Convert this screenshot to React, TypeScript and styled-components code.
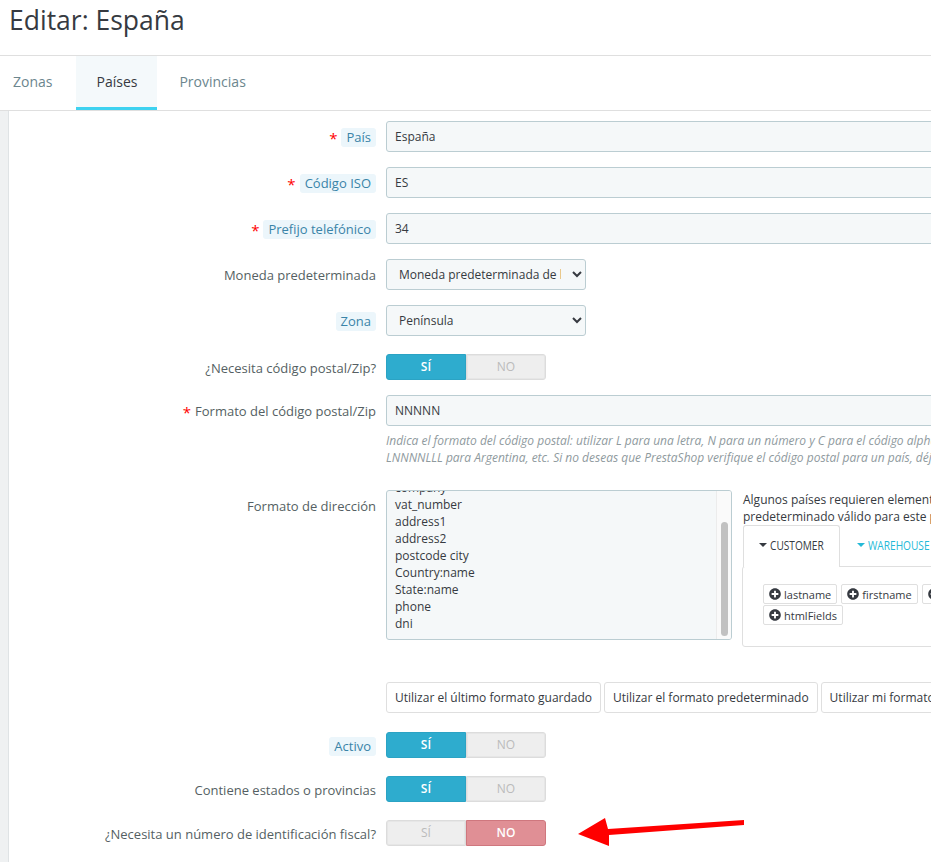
import React from 'react';
import styled, { createGlobalStyle } from 'styled-components';
import { FaPlusCircle } from 'react-icons/fa';

const GlobalStyle = createGlobalStyle`
  html, body {
    margin: 0;
    padding: 0;
    background: #fff;
    overflow: hidden;
  }
  body {
    font-family: "Open Sans", "Liberation Sans", sans-serif;
    color: #363a41;
  }
`;

const address = ['company', 'vat_number', 'address1', 'address2', 'postcode city', 'Country:name', 'State:name', 'phone', 'dni'];
const tags = ['lastname', 'firstname', 'company', 'htmlFields'];

const Field: React.FC<{ required?: boolean; hint?: boolean; label: string }> = ({ required, hint, label }) => (
  <LabelCell>
    {required && <Star>*</Star>}
    <LabelText $hint={hint}>{label}</LabelText>
  </LabelCell>
);

const Switch: React.FC<{ on: boolean }> = ({ on }) => (
  <Toggle>
    <ToggleHalf $active={on} $tone="yes">SÍ</ToggleHalf>
    <ToggleHalf $active={!on} $tone="no">NO</ToggleHalf>
  </Toggle>
);

const App: React.FC = () => (
  <Page>
    <GlobalStyle />
    <Header>
      <Title>Editar: España</Title>
    </Header>
    <Tabs>
      <Tab>Zonas</Tab>
      <Tab $active>Países</Tab>
      <Tab>Provincias</Tab>
    </Tabs>
    <Body>
      <Strip />
      <Form>
        <Row $top={10}>
          <Field required hint label="País" />
          <Input>España</Input>
        </Row>
        <Row $top={15}>
          <Field required hint label="Código ISO" />
          <Input>ES</Input>
        </Row>
        <Row $top={15}>
          <Field required hint label="Prefijo telefónico" />
          <Input>34</Input>
        </Row>
        <Row $top={15}>
          <Field label="Moneda predeterminada" />
          <Select defaultValue="default">
            <option value="default">Moneda predeterminada de la tienda</option>
          </Select>
        </Row>
        <Row $top={15}>
          <Field hint label="Zona" />
          <Select defaultValue="pen">
            <option value="pen">Península</option>
          </Select>
        </Row>
        <Row $top={18}>
          <Field label="¿Necesita código postal/Zip?" />
          <Switch on />
        </Row>
        <Row $top={15}>
          <Field required label="Formato del código postal/Zip" />
          <Input>NNNNN</Input>
        </Row>
        <HelpRow>
          <HelpLine>Indica el formato del código postal: utilizar L para una letra, N para un número y C para el código alpha ISO 3166-1 del país.</HelpLine>
          <HelpLine>LNNNNLLL para Argentina, etc. Si no deseas que PrestaShop verifique el código postal para un país, déjalo vacío.</HelpLine>
        </HelpRow>
        <AddressRow>
          <AddressLabel>
            <LabelText>Formato de dirección</LabelText>
          </AddressLabel>
          <AddressBox>
            <AddressLines>
              {address.map((line) => (
                <AddressLine key={line}>{line}</AddressLine>
              ))}
            </AddressLines>
            <ScrollTrack>
              <ScrollThumb />
            </ScrollTrack>
          </AddressBox>
          <Aside>
            <AsideText>Algunos países requieren elementos específicos en la dirección. Utiliza un formato</AsideText>
            <AsideText>predeterminado válido para este país.</AsideText>
            <AsideTabs>
              <AsideTab $active>
                <Caret $active />
                <Narrow>CUSTOMER</Narrow>
              </AsideTab>
              <AsideTab>
                <Caret />
                <Narrow>WAREHOUSE</Narrow>
              </AsideTab>
            </AsideTabs>
            <TagPanel>
              <TagList>
                {tags.map((tag) => (
                  <Tag key={tag}>
                    <FaPlusCircle size={12} color="#363a41" />
                    {tag}
                  </Tag>
                ))}
              </TagList>
            </TagPanel>
          </Aside>
        </AddressRow>
        <ButtonRow>
          <FormatButton>Utilizar el último formato guardado</FormatButton>
          <FormatButton>Utilizar el formato predeterminado</FormatButton>
          <FormatButton>Utilizar mi formato actual</FormatButton>
        </ButtonRow>
        <Row $top={19}>
          <Field hint label="Activo" />
          <Switch on />
        </Row>
        <Row $top={18}>
          <Field label="Contiene estados o provincias" />
          <Switch on />
        </Row>
        <Row $top={18}>
          <Field label="¿Necesita un número de identificación fiscal?" />
          <Switch on={false} />
        </Row>
      </Form>
    </Body>
    <Arrow viewBox="0 0 170 30" width="170" height="30">
      <polygon fill="#ff0000" points="1,17 28,1 31,12 167,3 167,8 32,18 32,29" />
    </Arrow>
  </Page>
);

const Page = styled.div`
  position: relative;
  width: 931px;
  height: 862px;
  overflow: hidden;
  background: #fff;
`;

const Header = styled.header`
  height: 56px;
  box-sizing: border-box;
  padding: 0 9px;
  border-bottom: 1px solid #dfdfdf;
`;

const Title = styled.h1`
  margin: 0;
  font-size: 26.5px;
  font-weight: 400;
  line-height: 40px;
  color: #363a41;
`;

const Tabs = styled.nav`
  display: flex;
  gap: 2px;
  height: 55px;
  box-sizing: border-box;
  margin-left: -7px;
  border-bottom: 1px solid #dfdfdf;
`;

const Tab = styled.div<{ $active?: boolean }>`
  box-sizing: border-box;
  height: 54px;
  padding: 0 20px;
  line-height: 52px;
  font-size: 14px;
  color: ${(p) => (p.$active ? '#363a41' : '#6c868e')};
  background: ${(p) => (p.$active ? '#f4f9fb' : 'transparent')};
  border-bottom: 3px solid ${(p) => (p.$active ? '#3ed2f0' : 'transparent')};
  &:first-child {
    margin-right: 2px;
  }
`;

const Body = styled.div`
  display: flex;
  height: 751px;
`;

const Strip = styled.div`
  flex: 0 0 8px;
  background: #eff1f2;
  border-right: 1px solid #dfe3e5;
`;

const Form = styled.div`
  flex: 1;
  min-width: 0;
  font-size: 13px;
`;

const Row = styled.div<{ $top: number }>`
  display: flex;
  align-items: center;
  gap: 10px;
  margin-top: ${(p) => p.$top}px;
`;

const LabelCell = styled.div`
  flex: 0 0 367px;
  display: flex;
  justify-content: flex-end;
  align-items: center;
  gap: 4px;
  padding-top: 2px;
`;

const Star = styled.span`
  color: #ff0000;
  font-size: 15px;
  line-height: 14px;
`;

const LabelText = styled.span<{ $hint?: boolean }>`
  padding: ${(p) => (p.$hint ? '0 5px' : '0')};
  line-height: 19px;
  border-radius: 3px;
  color: ${(p) => (p.$hint ? '#3a84a8' : '#555f63')};
  background: ${(p) => (p.$hint ? '#ecf6fb' : 'transparent')};
`;

const Input = styled.div`
  flex: 0 0 700px;
  box-sizing: border-box;
  height: 31px;
  padding: 0 8px;
  line-height: 29px;
  font-size: 12px;
  color: #363a41;
  background: #f5f8f9;
  border: 1px solid #bbcdd2;
  border-radius: 3px;
`;

const Select = styled.select`
  flex: 0 0 200px;
  width: 200px;
  box-sizing: border-box;
  height: 31px;
  padding: 0 8px;
  font-family: inherit;
  font-size: 12px;
  color: #363a41;
  background-color: #f5f8f9;
  border: 1px solid #bbcdd2;
  border-radius: 3px;
`;

const Toggle = styled.div`
  display: flex;
  width: 160px;
  height: 26px;
`;

const ToggleHalf = styled.div<{ $active: boolean; $tone: 'yes' | 'no' }>`
  flex: 1;
  box-sizing: border-box;
  text-align: center;
  font-size: 12px;
  line-height: 24px;
  font-weight: ${(p) => (p.$active ? 600 : 400)};
  color: ${(p) => (p.$active ? '#fff' : '#bbb')};
  background: ${(p) => {
    if (!p.$active) return '#eee';
    return p.$tone === 'yes' ? '#2eacce' : '#e08f95';
  }};
  border: 1px solid ${(p) => {
    if (!p.$active) return '#dcdcdc';
    return p.$tone === 'yes' ? '#2ba3c4' : '#cf777e';
  }};
  box-shadow: ${(p) => (p.$active ? 'none' : 'inset 0 0 0 1px #e6e6e6')};
  border-radius: ${(p) => (p.$tone === 'yes' ? '3px 0 0 3px' : '0 3px 3px 0')};
`;

const HelpRow = styled.div`
  margin: 6px 0 0 377px;
  width: 560px;
  overflow: hidden;
`;

const HelpLine = styled.p`
  margin: 0;
  font-size: 12px;
  font-style: italic;
  line-height: 17px;
  color: #8f9a9e;
  white-space: nowrap;
`;

const AddressRow = styled.div`
  display: flex;
  align-items: flex-start;
  gap: 10px;
  margin-top: 24px;
`;

const AddressLabel = styled.div`
  flex: 0 0 367px;
  display: flex;
  justify-content: flex-end;
  padding-top: 7px;
`;

const AddressBox = styled.div`
  flex: 0 0 346px;
  display: flex;
  box-sizing: border-box;
  height: 150px;
  overflow: hidden;
  background: #f5f8f9;
  border: 1px solid #bbcdd2;
  border-radius: 3px;
`;

const AddressLines = styled.div`
  flex: 1;
  padding: 0 8px;
  margin-top: -12px;
  font-size: 12px;
  color: #363a41;
`;

const AddressLine = styled.div`
  height: 17px;
  line-height: 17px;
  font-size: 12px;
`;

const ScrollTrack = styled.div`
  flex: 0 0 15px;
  box-sizing: border-box;
  padding: 31px 3px 3px 4px;
  background: #fafafa;
  border-left: 1px solid #ececec;
`;

const ScrollThumb = styled.div`
  height: 114px;
  border-radius: 4px;
  background: #c1c1c1;
`;

const Aside = styled.div`
  flex: 0 0 auto;
  width: 500px;
  padding-top: 1px;
`;

const AsideText = styled.div`
  margin-left: 1px;
  font-size: 12px;
  line-height: 17px;
  white-space: nowrap;
  color: #363a41;
`;

const AsideTabs = styled.div`
  display: flex;
  height: 41px;
  padding-left: 1px;
`;

const AsideTab = styled.div<{ $active?: boolean }>`
  display: flex;
  align-items: center;
  gap: 3px;
  box-sizing: border-box;
  height: ${(p) => (p.$active ? '42px' : '41px')};
  padding: 0 ${(p) => (p.$active ? '15px' : '16px')} 3px;
  width: ${(p) => (p.$active ? '97px' : 'auto')};
  color: ${(p) => (p.$active ? '#363a41' : '#25b9d7')};
  background: #fff;
  border: 1px solid ${(p) => (p.$active ? '#dfdfdf' : 'transparent')};
  border-bottom: none;
  border-radius: 3px 3px 0 0;
  position: relative;
  z-index: 1;
`;

const Caret = styled.span<{ $active?: boolean }>`
  width: 0;
  height: 0;
  border-left: 4.5px solid transparent;
  border-right: 4.5px solid transparent;
  border-top: 4.5px solid ${(p) => (p.$active ? '#363a41' : '#25b9d7')};
`;

const Narrow = styled.span`
  display: inline-block;
  font-size: 13.5px;
  font-weight: 500;
  transform: scaleX(0.75);
  transform-origin: left center;
  margin-right: -14px;
`;

const TagPanel = styled.div`
  box-sizing: border-box;
  height: 81px;
  padding: 17px 20px;
  border: 1px solid #dfdfdf;
  border-radius: 3px;
`;

const TagList = styled.div`
  display: flex;
  flex-wrap: wrap;
  gap: 1px 4px;
  width: 240px;
`;

const Tag = styled.span`
  display: inline-flex;
  align-items: center;
  gap: 3px;
  box-sizing: border-box;
  height: 20px;
  padding: 0 5px;
  font-size: 11px;
  color: #363a41;
  background: #fff;
  border: 1px solid #dfdfdf;
  border-radius: 2px;
`;

const ButtonRow = styled.div`
  display: flex;
  gap: 3px;
  margin: 35px 0 0 377px;
  width: 700px;
`;

const FormatButton = styled.div`
  box-sizing: border-box;
  height: 31px;
  padding: 0 8px;
  line-height: 29px;
  font-size: 12px;
  white-space: nowrap;
  color: #363a41;
  background: #fff;
  border: 1px solid #dfdfdf;
  border-radius: 3px;
`;

const Arrow = styled.svg`
  position: absolute;
  left: 577px;
  top: 817px;
`;

export default App;
